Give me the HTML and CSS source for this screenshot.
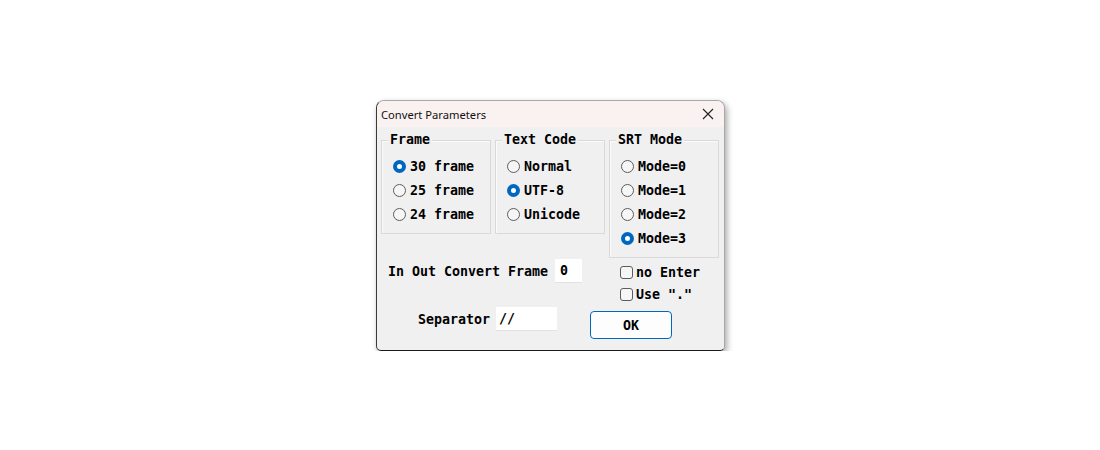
FILE: index.html
```html
<!DOCTYPE html>
<html>
<head>
<meta charset="utf-8">
<link rel="stylesheet" href="styles.css">
</head>
<body>
<div class="dialog">
  <div class="titlebar">
    <span class="title">Convert Parameters</span>
    <svg class="close" width="12" height="12" viewBox="0 0 12 12"><path d="M1 1 L11 11 M11 1 L1 11" stroke="#222" stroke-width="1.1" fill="none"/></svg>
  </div>
  <div class="content">
    <div class="groups">
      <div class="group g-frame">
        <span class="legend">Frame</span>
        <div class="opt"><span class="radio on"></span>30 frame</div>
        <div class="opt"><span class="radio"></span>25 frame</div>
        <div class="opt"><span class="radio"></span>24 frame</div>
      </div>
      <div class="group g-code">
        <span class="legend">Text Code</span>
        <div class="opt"><span class="radio"></span>Normal</div>
        <div class="opt"><span class="radio on"></span>UTF-8</div>
        <div class="opt"><span class="radio"></span>Unicode</div>
      </div>
      <div class="group g-srt">
        <span class="legend">SRT Mode</span>
        <div class="opt"><span class="radio"></span>Mode=0</div>
        <div class="opt"><span class="radio"></span>Mode=1</div>
        <div class="opt"><span class="radio"></span>Mode=2</div>
        <div class="opt"><span class="radio on"></span>Mode=3</div>
      </div>
    </div>
    <div class="bottom">
      <div class="left">
        <div class="row row-inout"><span class="lbl">In Out Convert Frame</span><span class="input in-frame">0</span></div>
        <div class="row row-sep"><span class="lbl">Separator</span><span class="input in-sep">//</span></div>
      </div>
      <div class="right">
        <div class="chk"><span class="box"></span>no Enter</div>
        <div class="chk"><span class="box"></span>Use "."</div>
        <div class="btn">OK</div>
      </div>
    </div>
  </div>
</div>
</body>
</html>
```
FILE: styles.css
```css
html, body {
  margin: 0;
  padding: 0;
  background: #ffffff;
}
.dialog {
  margin: 100px 0 0 376px;
  width: 349px;
  height: 251px;
  box-sizing: border-box;
  border: 1px solid #a8a8a8;
  border-left-color: #3a3a3a;
  border-bottom-color: #1a1a1a;
  border-radius: 8px 8px 5px 5px;
  background: #f0f0f0;
  box-shadow: 2px 3px 6px rgba(0,0,0,0.35);
  overflow: hidden;
  font-family: "DejaVu Sans Mono", "Liberation Mono", monospace;
  font-weight: bold;
  font-size: 13.3px;
  color: #000;
}
.titlebar {
  height: 26px;
  background: #f9f2f1;
  display: flex;
  align-items: center;
  justify-content: space-between;
  padding: 0 10px 0 4px;
}
.title {
  font-family: "Noto Sans", "Open Sans", sans-serif;
  font-weight: normal;
  font-size: 11.2px;
  color: #111;
  margin-top: 1px;
}
.content {
  padding: 13px 0 0 4px;
}
.groups {
  display: flex;
  align-items: flex-start;
}
.group {
  position: relative;
  box-sizing: border-box;
  border: 1px solid #d9d9d9;
  box-shadow: inset 1px 1px 0 #fbfbfb;
  padding: 13px 0 0 11px;
}
.g-frame { width: 110px; height: 94px; }
.g-code { width: 110px; height: 94px; margin-left: 4px; }
.g-srt { width: 110px; height: 118px; margin-left: 4px; }
.legend {
  position: absolute;
  top: -9px;
  left: 6px;
  padding: 0 2px;
  background: #f0f0f0;
  line-height: 16px;
}
.opt {
  height: 24px;
  display: flex;
  align-items: center;
  gap: 4px;
}
.radio {
  width: 13px;
  height: 13px;
  box-sizing: border-box;
  border-radius: 50%;
  border: 1px solid #5c5c5c;
  background: #f6f6f6;
}
.radio.on {
  border: 4px solid #0067c0;
  background: #ffffff;
}
.bottom {
  display: flex;
}
.left {
  width: 209px;
  padding-left: 7px;
  box-sizing: border-box;
}
.row {
  display: flex;
  align-items: center;
}
.row-inout {
  margin-top: 1px;
  gap: 7px;
}
.row-sep {
  margin-top: 24px;
  padding-left: 30px;
  gap: 6px;
}
.input {
  height: 24px;
  background: #ffffff;
  box-sizing: border-box;
  border-bottom: 1px solid #e2e2e2;
  display: flex;
  align-items: center;
  font-weight: bold;
}
.in-frame { width: 27px; padding-left: 5px; }
.in-sep { width: 61px; padding-left: 3px; }
.right {
  padding-top: 3px;
}
.chk {
  height: 22px;
  display: flex;
  align-items: center;
  gap: 3px;
  margin-left: 30px;
}
.box {
  width: 13px;
  height: 13px;
  box-sizing: border-box;
  border: 1px solid #5c5c5c;
  border-radius: 3px;
  background: #f6f6f6;
}
.btn {
  margin-top: 6px;
  width: 82px;
  height: 28px;
  box-sizing: border-box;
  border: 1px solid #0067c0;
  border-radius: 4px;
  background: #fdfdfd;
  display: flex;
  align-items: center;
  justify-content: center;
}
```
